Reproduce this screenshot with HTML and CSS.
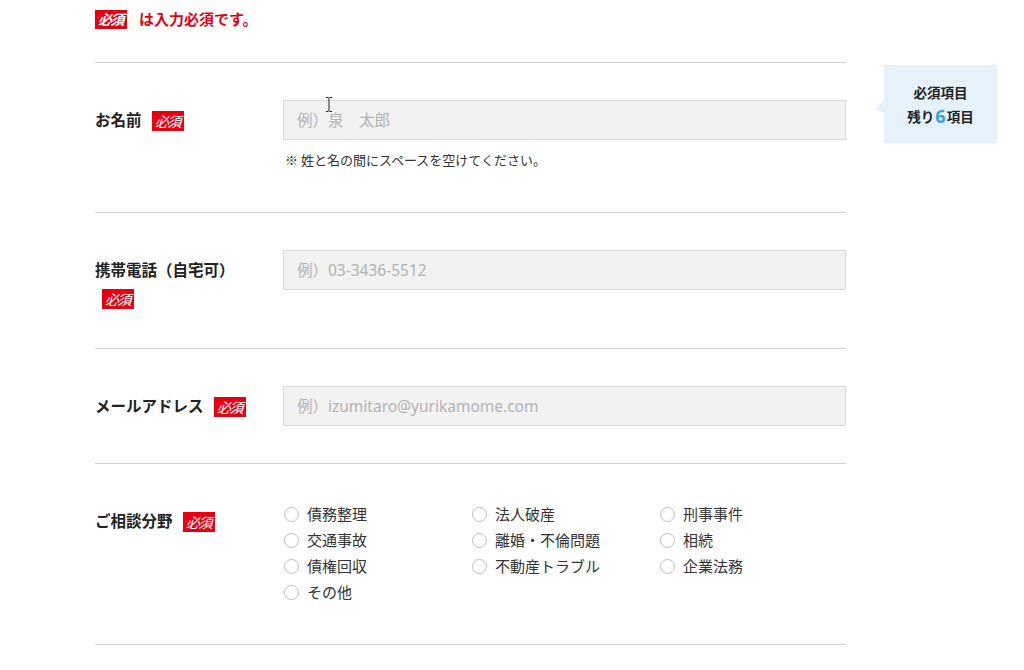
FILE: index.html
```html
<!DOCTYPE html>
<html lang="ja">
<head>
<meta charset="utf-8">
<title>お問い合わせフォーム</title>
<link rel="stylesheet" href="styles.css">
</head>
<body>
<div class="page">
  <form class="form">
    <p class="notice"><span class="badge badge-top">必須</span><span class="notice-text">は入力必須です。</span></p>

    <div class="row">
      <div class="label">お名前 <span class="badge">必須</span></div>
      <div class="field">
        <input class="text" type="text" placeholder="例）泉　太郎">
        <p class="note">※ 姓と名の間にスペースを空けてください。</p>
      </div>
    </div>

    <div class="row">
      <div class="label">携帯電話（自宅可） <span class="badge">必須</span></div>
      <div class="field">
        <input class="text" type="tel" placeholder="例）03-3436-5512">
      </div>
    </div>

    <div class="row">
      <div class="label">メールアドレス <span class="badge">必須</span></div>
      <div class="field">
        <input class="text" type="email" placeholder="例）izumitaro@yurikamome.com">
      </div>
    </div>

    <div class="row row-radio">
      <div class="label">ご相談分野 <span class="badge">必須</span></div>
      <div class="field radios">
        <label class="radio"><input type="radio" name="area"><span>債務整理</span></label>
        <label class="radio"><input type="radio" name="area"><span>法人破産</span></label>
        <label class="radio"><input type="radio" name="area"><span>刑事事件</span></label>
        <label class="radio"><input type="radio" name="area"><span>交通事故</span></label>
        <label class="radio"><input type="radio" name="area"><span>離婚・不倫問題</span></label>
        <label class="radio"><input type="radio" name="area"><span>相続</span></label>
        <label class="radio"><input type="radio" name="area"><span>債権回収</span></label>
        <label class="radio"><input type="radio" name="area"><span>不動産トラブル</span></label>
        <label class="radio"><input type="radio" name="area"><span>企業法務</span></label>
        <label class="radio"><input type="radio" name="area"><span>その他</span></label>
      </div>
    </div>
  </form>

  <div class="remain">
    <p class="remain-line remain-title">必須項目</p>
    <p class="remain-line">残り<span class="remain-num">6</span>項目</p>
  </div>

  <svg class="cursor" width="8" height="15" viewBox="0 0 8 15" aria-hidden="true">
    <path d="M1 0.5h2.2l0.8 0.8 0.8-0.8H7M4 1.3v12.4M1 14.5h2.2l0.8-0.8 0.8 0.8H7" fill="none" stroke="#222" stroke-width="1"/>
  </svg>
</div>
</body>
</html>
```

FILE: styles.css
```css
* { box-sizing: border-box; }

html, body {
  margin: 0;
  padding: 0;
  background: #fff;
}

body {
  font-family: "Noto Sans CJK JP", "Noto Sans", sans-serif;
  color: #222;
  width: 1024px;
  height: 670px;
  overflow: hidden;
}

.page {
  position: relative;
  padding-left: 95px;
}

.form {
  width: 751px;
}

.notice {
  margin: 0;
  padding: 8px 0 32px;
  display: flex;
  align-items: center;
  height: 62px;
  line-height: 22px;
}

.notice-text {
  color: #e60012;
  font-weight: bold;
  font-size: 15px;
  margin-left: 12px;
}

.badge {
  display: inline-block;
  width: 32px;
  height: 20px;
  line-height: 20px;
  background: #e60012;
  color: #fff;
  font-size: 14px;
  font-weight: normal;
  font-style: italic;
  text-align: center;
  vertical-align: middle;
  margin-left: 7px;
  letter-spacing: -1.5px;
  text-indent: -1px;
}

.badge-top {
  margin-left: 0;
  height: 19px;
  line-height: 19px;
  font-weight: bold;
}

.row {
  display: grid;
  grid-template-columns: 188px 563px;
  border-top: 1px solid #d2d2d2;
  padding: 37px 0;
}

.row-radio {
  padding-bottom: 39px;
  border-bottom: 1px solid #d2d2d2;
}

.label {
  font-size: 15.5px;
  font-weight: bold;
  line-height: 28px;
  padding-top: 5px;
  padding-right: 28px;
}

.label .badge {
  position: relative;
  top: -1px;
}

.field {
  min-width: 0;
}

.text {
  display: block;
  width: 563px;
  height: 40px;
  margin: 0;
  padding: 0 13px;
  border: 1px solid #dadada;
  background: #f2f2f2;
  font-family: "Noto Sans", "Noto Sans CJK JP", sans-serif;
  font-size: 15.5px;
  color: #333;
  outline: none;
  border-radius: 0;
}

.text::placeholder {
  color: #b3b3b3;
}

.note {
  margin: 10px 0 5px 2px;
  font-size: 13px;
  line-height: 20px;
  color: #333;
}

.radios {
  display: grid;
  grid-template-columns: repeat(3, 188px);
  grid-auto-rows: 26px;
}

.radio {
  display: flex;
  align-items: center;
  font-size: 15px;
  color: #333;
  line-height: 26px;
}

.radio input {
  -webkit-appearance: none;
  appearance: none;
  width: 15px;
  height: 15px;
  margin: 0 8px 0 1px;
  border: 1.5px solid #bdbdbd;
  border-radius: 50%;
  background: #fff;
  flex: none;
}

.remain {
  position: absolute;
  left: 884px;
  top: 65px;
  width: 113px;
  height: 78px;
  background: #e5f2fc;
  padding-top: 15px;
  text-align: center;
}

.remain::before {
  content: "";
  position: absolute;
  left: -9px;
  top: 35px;
  width: 9px;
  height: 12px;
  background: #e5f2fc;
  clip-path: polygon(100% 0, 100% 100%, 0 80%);
}

.remain-line {
  margin: 0;
  font-size: 13.5px;
  font-weight: bold;
  line-height: 24px;
  color: #222;
}

.remain-num {
  color: #3b9de3;
  font-size: 18px;
  font-family: "Noto Sans", sans-serif;
  font-weight: bold;
  margin: 0 1px;
  vertical-align: -1px;
  line-height: 1;
}

.cursor {
  position: absolute;
  left: 325px;
  top: 97px;
}
```
